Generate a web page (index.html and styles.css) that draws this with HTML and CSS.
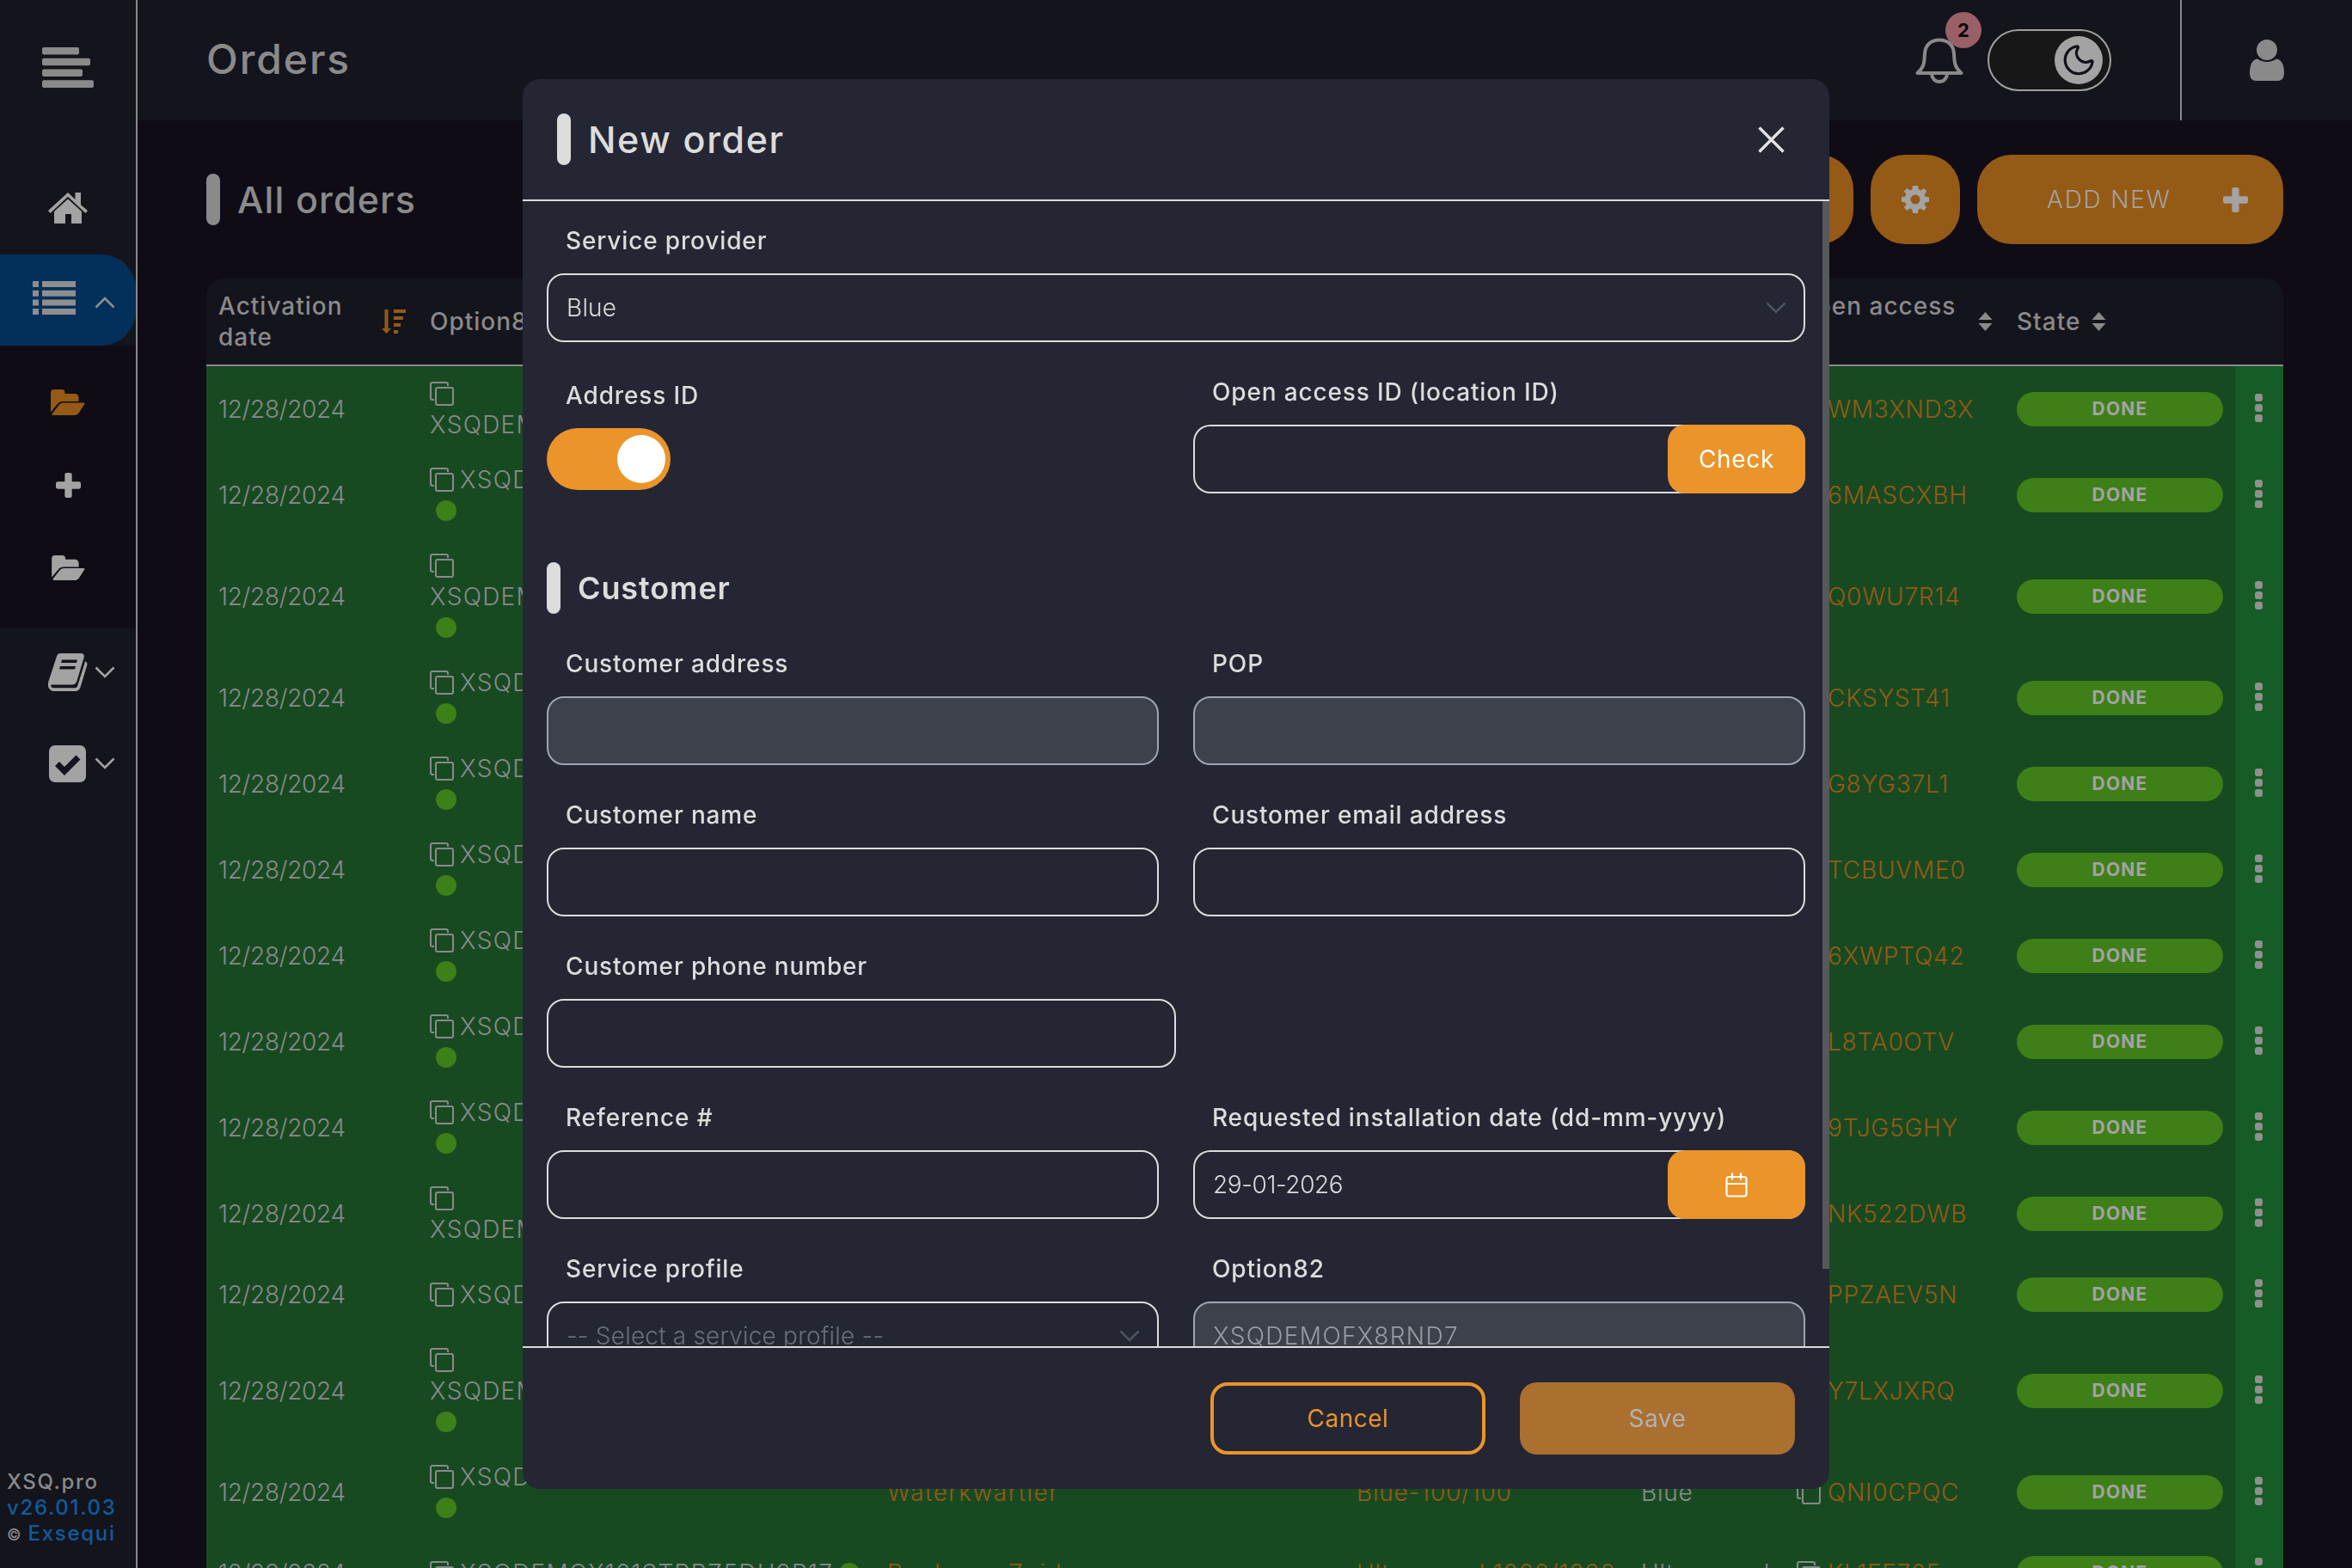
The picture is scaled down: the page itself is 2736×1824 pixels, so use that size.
FILE: index.html
```html
<!DOCTYPE html>
<html lang="en">
<head>
    <meta charset="UTF-8">
    <meta name="viewport" content="width=device-width, initial-scale=1.0">
    <title>Orders - XSQ.pro</title>
    <link rel="stylesheet" href="styles.css">
</head>
<body>
    <svg class="sprite">
        <symbol id="icon-copy" viewBox="0 0 28 28">
            <path d="M21 5V3a2 2 0 0 0-2-2H3a2 2 0 0 0-2 2v16a2 2 0 0 0 2 2h2" fill="none" stroke="currentColor" stroke-width="2"/>
            <rect x="7" y="7" width="20" height="20" rx="2" fill="none" stroke="currentColor" stroke-width="2"/>
        </symbol>
        <symbol id="icon-down" viewBox="0 0 24 14">
            <path d="M1.5 1.5L12 12L22.5 1.5" fill="none" stroke="currentColor" stroke-width="2.6"/>
        </symbol>
        <symbol id="icon-up" viewBox="0 0 24 14">
            <path d="M1.5 12.5L12 2L22.5 12.5" fill="none" stroke="currentColor" stroke-width="2.6"/>
        </symbol>
        <symbol id="icon-folder" viewBox="0 0 40 30">
            <path d="M0 26.5V4a4 4 0 0 1 4-4h8.500a4 4 0 0 1 4 4v1h11.500a4.500 4.500 0 0 1 4.500 4.500V14H15c-3.500 0-5.500 1-7.500 3.500z"/>
            <path d="M15 15.500h23.500c1 0 1.300.8.900 1.600l-6.300 9.700C31.500 29 30 30 27.500 30H3c-1.500 0-2-1-1.200-2L9.500 18.200C11 16.300 12.500 15.500 15 15.500z"/>
        </symbol>
        <symbol id="icon-plus" viewBox="0 0 28 28">
            <path d="M12 0h4a2 2 0 0 1 2 2v8h8a2 2 0 0 1 2 2v4a2 2 0 0 1-2 2h-8v8a2 2 0 0 1-2 2h-4a2 2 0 0 1-2-2v-8H2a2 2 0 0 1-2-2v-4a2 2 0 0 1 2-2h8V2a2 2 0 0 1 2-2z"/>
        </symbol>
        <symbol id="icon-sort" viewBox="0 0 16 22">
            <path d="M8 0L16 9H0zM8 22L0 13H16z"/>
        </symbol>
    </svg>

    <div class="app">
        <aside class="sidebar">
            <div class="burger">
                <svg width="60" height="47" viewBox="0 0 60 47"><rect width="43" height="8.500" rx="2"/><rect y="12.800" width="56" height="8.500" rx="2"/><rect y="25.500" width="47" height="8.500" rx="2"/><rect y="38.300" width="60" height="8.700" rx="2"/></svg>
            </div>
            <div class="nav-item">
                <svg class="nav-icon" width="46" height="36" viewBox="0 0 46 36"><path d="M23 0l8.500 8V0H38v14.200L46 21l-2.500 3L23 4.800L2.500 24L0 21z"/><path d="M23 7.500L39 22v14H27V25h-7v11H7V22z"/></svg>
            </div>
            <div class="nav-item nav-active">
                <svg width="50" height="39" viewBox="0 0 50 39"><path d="M0 0h7v7H0zM11 0h39v7H11zM0 10.700h7v7H0zM11 10.700h39v7H11zM0 21.400h7v7H0zM11 21.400h39v7H11zM0 32h7v7H0zM11 32h39v7H11z"/></svg>
                <svg class="chevron"><use href="#icon-up"/></svg>
            </div>
            <div class="submenu">
                <div class="sub-item sub-current"><svg width="40" height="30"><use href="#icon-folder"/></svg></div>
                <div class="sub-item"><svg width="29" height="29"><use href="#icon-plus"/></svg></div>
                <div class="sub-item"><svg width="39" height="29"><use href="#icon-folder"/></svg></div>
            </div>
            <div class="nav-item">
                <svg class="nav-icon" width="46" height="44" viewBox="0 0 46 44">
                    <path fill-rule="evenodd" d="M14.500 0H38c3 0 4.500 2 3.700 4.800L33.500 32c-1 3.200-2.800 4.500-6 4.500H4.500c-1.500 0-1.500 1.500-.8 2.500.6.900 1.600 1.200 3 1.200h24.500c1.500 0 2.400-.8 3-2.500L42.500 11.500c.2-.8.3-1.500.3-2.200 2 .8 3.200 2 2.400 4.700L37.500 39.500c-.8 2.700-2.800 4.500-6 4.500H7c-3.500 0-6-2-7-5.500V34L10 3.500C10.800 1 12 0 14.500 0zM16 7.500l-1 3.500h18l1-3.500zM14 15l-1 3.500h18l1-3.500z"/>
                </svg>
                <svg class="chevron"><use href="#icon-down"/></svg>
            </div>
            <div class="nav-item nav-tasks">
                <svg class="nav-icon" width="43" height="43" viewBox="0 0 43 43"><rect width="43" height="43" rx="7"/><path d="M9.500 21.500l8.500 8.500L34 14" class="tick"/></svg>
                <svg class="chevron"><use href="#icon-down"/></svg>
            </div>
            <div class="version">
                <div class="v-name">XSQ.pro</div>
                <div class="v-link v-num">v26.01.03</div>
                <div><span class="v-copy">©</span> <span class="v-link">Exsequi</span></div>
            </div>
        </aside>

        <div class="main">
            <header class="topbar">
                <h1>Orders</h1>
                <div class="bell">
                    <svg width="56" height="53" viewBox="0 0 56 53"><path d="M28 2.500c10 0 16.500 6 17 16 .5 11 1 16 8.500 22.500H2.500C10 34.500 10.500 29.500 11 18.500 11.500 8.500 18 2.500 28 2.500zM19 43c1 5 4.500 8 9 8s8-3 9-8" fill="none" stroke="currentColor" stroke-width="4" stroke-linejoin="round"/></svg>
                    <span class="badge">2</span>
                </div>
                <div class="theme-toggle">
                    <div class="knob"><svg width="36" height="36" viewBox="0 0 36 36"><path d="M15.500 2A16 16 0 1 0 34 20.500c.5-1.800-1-2.500-2.500-1.500C22 24 11.500 14 17 4.200c.8-1.400.2-2.500-1.500-2.200z" fill="none" stroke="#11111a" stroke-width="3.200"/></svg></div>
                </div>
                <div class="user">
                    <svg width="40" height="48" viewBox="0 0 40 48"><ellipse cx="20" cy="12" rx="12" ry="12"/><path d="M9 22.500c6 4.500 16 4.500 22 0 6 .5 9 7 9 16 0 6-2.500 9.500-7 9.500H7c-4.500 0-7-3.500-7-9.500 0-9 3-15.500 9-16z"/></svg>
                </div>
            </header>

            <div class="content">
                <div class="title-row">
                    <h2 class="marked">All orders</h2>
                    <div class="actions">
                        <button class="btn-icon"></button>
                        <button class="btn-icon">
                            <svg width="32" height="32" viewBox="0 0 32 32"><path fill-rule="evenodd" d="M13 0h6l.8 4.300 2.600 1.100L26 2.900 29.300 6.500l-2.700 3.400 1.100 2.800L32 13.200v5.600l-4.300.6-1.100 2.700 2.500 3.500-3.500 3.500-3.400-2.500-2.700 1.100L19 32h-6l-.6-4.300-2.700-1.100-3.500 2.500-3.300-3.600 2.500-3.400-1.100-2.700L0 18.800v-5.600l4.300-.6 1.100-2.700L2.900 6.400l3.400-3.500 3.400 2.500 2.700-1.100zM16 10.500a5.500 5.500 0 1 0 0 11 5.500 5.500 0 0 0 0-11z"/></svg>
                        </button>
                        <button class="btn-add"><span>ADD NEW</span><svg width="29" height="29"><use href="#icon-plus"/></svg></button>
                    </div>
                </div>

                <div class="table">
                    <div class="row head">
                        <div class="between"><span>Activation<br>date</span>
                            <svg class="sorted" width="28" height="28" viewBox="0 0 28 28"><path d="M3.500 0h4v22H11L5.500 28 0 22h3.500zM14 0h14v4H14zM14 8h11v4H14zM14 16h8v4H14zM14 24h5v4H14z"/></svg>
                        </div>
                        <div><span>Option82</span></div>
                        <div></div>
                        <div></div>
                        <div></div>
                        <div class="between"><span>Open access<br>ID</span><svg width="17" height="22"><use href="#icon-sort"/></svg></div>
                        <div class="state"><span>State</span><svg width="17" height="22"><use href="#icon-sort"/></svg></div>
                        <div></div>
                    </div>
                    <div id="orderRows"></div>
                </div>
            </div>
        </div>
    </div>

    <div class="modal">
        <div class="modal-head">
            <h2 class="marked">New order</h2>
            <svg width="31" height="31" viewBox="0 0 31 31"><path d="M1.500 1.500l28 28M29.500 1.500l-28 28" stroke="#e3e3e3" stroke-width="3.400" fill="none"/></svg>
        </div>
        <div class="modal-body">
            <div class="field">
                <label>Service provider</label>
                <div class="input select"><span>Blue</span><svg class="chevron"><use href="#icon-down"/></svg></div>
            </div>
            <div class="pair">
                <div class="field field-toggle">
                    <label>Address ID</label>
                    <div class="toggle"><div class="toggle-knob"></div></div>
                </div>
                <div class="field">
                    <label>Open access ID (location ID)</label>
                    <div class="input grouped"><button class="btn-end">Check</button></div>
                </div>
            </div>
            <h3 class="marked">Customer</h3>
            <div class="pair">
                <div class="field"><label>Customer address</label><div class="input disabled"></div></div>
                <div class="field"><label>POP</label><div class="input disabled"></div></div>
            </div>
            <div class="pair">
                <div class="field"><label>Customer name</label><div class="input"></div></div>
                <div class="field"><label>Customer email address</label><div class="input"></div></div>
            </div>
            <div class="field field-half"><label>Customer phone number</label><div class="input"></div></div>
            <div class="pair">
                <div class="field"><label>Reference #</label><div class="input"></div></div>
                <div class="field">
                    <label>Requested installation date (dd-mm-yyyy)</label>
                    <div class="input grouped"><span class="date">29-01-2026</span>
                        <button class="btn-end"><svg width="26" height="29" viewBox="0 0 26 29"><path d="M4 5h18a2.500 2.500 0 0 1 2.500 2.500v17.500a2.500 2.500 0 0 1-2.500 2.500H4a2.500 2.500 0 0 1-2.500-2.500V7.500A2.500 2.500 0 0 1 4 5zM1.500 13h23M8 .5v8M18 .5v8" fill="none" stroke="#fff" stroke-width="2.200"/></svg></button>
                    </div>
                </div>
            </div>
            <div class="pair">
                <div class="field"><label>Service profile</label><div class="input select placeholder"><span>-- Select a service profile --</span><svg class="chevron"><use href="#icon-down"/></svg></div></div>
                <div class="field"><label>Option82</label><div class="input disabled"><span class="code">XSQDEMOFX8RND7</span></div></div>
            </div>
            <div class="scroll-thumb"></div>
        </div>
        <div class="modal-foot">
            <button class="btn-cancel">Cancel</button>
            <button class="btn-save">Save</button>
        </div>
    </div>

    <script src="script.js"></script>
</body>
</html>
```
FILE: styles.css
```css
* {
    box-sizing: border-box;
}
body {
    margin: 0;
    height: 1824px;
    overflow: hidden;
    background: #0f0c16;
    color: #8a8a8a;
    font-family: Inter, "Open Sans", sans-serif;
    font-size: 28px;
    line-height: 36px;
}
h1, h2, h3 {
    margin: 0;
    font-weight: 500;
}
button {
    border: none;
    padding: 0;
    font: inherit;
    color: inherit;
}
svg {
    display: block;
    flex: none;
    fill: currentColor;
}
.sprite {
    position: absolute;
    width: 0;
    height: 0;
}
.app {
    display: flex;
    height: 1824px;
}

/* sidebar */
.sidebar {
    width: 160px;
    flex: none;
    display: flex;
    flex-direction: column;
    background: #14141d;
    border-right: 2px solid #8a8a8a;
}
.burger {
    height: 190px;
    padding: 55px 0 0 49px;
}
.nav-item {
    height: 106px;
    display: flex;
    align-items: center;
    justify-content: flex-end;
    gap: 8px;
    padding-right: 24px;
    padding-bottom: 2px;
    color: #a3a3a3;
}
.nav-item .nav-icon:last-child {
    margin-right: 32px;
}
.nav-tasks {
    gap: 10px;
}
.nav-active {
    background: #03305a;
    color: #8f8f8f;
    border-radius: 0 40px 40px 0;
    gap: 22px;
    padding-bottom: 5px;
}
.nav-active .chevron {
    margin-top: 11px;
}
.chevron {
    width: 24px;
    height: 14px;
}
.tick {
    fill: none;
    stroke: #14141d;
    stroke-width: 7;
}
.submenu {
    height: 328px;
    padding-top: 18px;
    background: #0f0c16;
    color: #a3a3a3;
}
.sub-item {
    height: 96px;
    display: flex;
    align-items: center;
    justify-content: center;
}
.sub-current {
    color: #955a15;
}
.version {
    margin-top: auto;
    padding: 0 0 23px 8px;
    font-size: 24px;
    font-weight: 500;
    line-height: 30px;
    white-space: nowrap;
    letter-spacing: 1.700px;
}
.v-link {
    color: #0f5c9c;
}
.v-copy {
    font-size: 18px;
    letter-spacing: 0;
}

/* top bar */
.main {
    flex: 1;
}
.topbar {
    height: 140px;
    display: flex;
    align-items: center;
    padding-left: 80px;
    background: #14141d;
}
.topbar h1 {
    font-size: 48px;
    line-height: 60px;
    margin: -3px auto 0 0;
    letter-spacing: 1.900px;
}
.bell {
    position: relative;
    margin-right: 28px;
}
.badge {
    position: absolute;
    left: 35px;
    top: -30px;
    width: 42px;
    height: 42px;
    border-radius: 50%;
    background: #9a6065;
    color: #08080c;
    font-size: 22px;
    font-weight: 700;
    line-height: 42px;
    text-align: center;
}
.theme-toggle {
    width: 144px;
    height: 72px;
    display: flex;
    align-items: center;
    justify-content: flex-end;
    padding-right: 8px;
    background: #171717;
    border: 2px solid #a0a0a0;
    border-radius: 36px;
}
.knob {
    width: 56px;
    height: 56px;
    display: flex;
    align-items: center;
    justify-content: center;
    border-radius: 50%;
    background: #a3a3a3;
}
.user {
    width: 200px;
    height: 140px;
    margin-left: 80px;
    display: flex;
    align-items: center;
    justify-content: center;
    border-left: 2px solid #8a8a8a;
}

/* page heading */
.content {
    padding: 40px 80px 0;
}
.title-row {
    display: flex;
    justify-content: space-between;
    align-items: center;
    height: 104px;
    margin-bottom: 40px;
}
.marked {
    display: flex;
    align-items: center;
    gap: 20px;
    font-size: 43px;
    line-height: 58px;
    letter-spacing: 1.100px;
}
.marked::before {
    content: "";
    width: 16px;
    height: 60px;
    border-radius: 8px;
    background: currentColor;
}
.actions {
    display: flex;
    gap: 20px;
    color: #a3a3a3;
}
.btn-icon {
    width: 104px;
    height: 104px;
    display: flex;
    align-items: center;
    justify-content: center;
    border-radius: 40px;
    background: #955a15;
}
.btn-add {
    width: 356px;
    height: 104px;
    display: flex;
    align-items: center;
    justify-content: space-between;
    padding: 0 41px 0 81px;
    border-radius: 40px;
    background: #955a15;
    font-weight: 300;
    letter-spacing: 1.800px;
}

/* orders table */
.table {
    border-radius: 20px 20px 0 0;
    overflow: hidden;
    background: #14141d;
}
.row {
    display: grid;
    grid-template-columns: 246px 532px 546px 331px 181px 256px 268px 56px;
}
.row > div {
    display: flex;
    align-items: center;
    padding: 0 14px;
    white-space: nowrap;
}
.head {
    height: 102px;
    border-bottom: 2px solid #8a8a8a;
    font-weight: 500;
    letter-spacing: 1px;
}
.head .between {
    justify-content: space-between;
}
.head .state {
    gap: 13px;
}
.sorted {
    color: #955a15;
}
.order {
    background: #184a22;
    font-weight: 300;
    letter-spacing: 0.800px;
}
.order-100 {
    height: 100px;
}
.order-136 {
    height: 136px;
}
.order-88 {
    height: 88px;
}
.order .day {
    letter-spacing: -0.300px;
}
.order .code {
    letter-spacing: 1.300px;
}
.order .line {
    display: flex;
    align-items: center;
    gap: 7px;
    height: 36px;
}
.dot {
    width: 24px;
    height: 24px;
    margin-left: 7px;
    border-radius: 50%;
    background: #3e7f18;
}
.line span + .dot {
    margin-left: 0;
}
.link {
    color: #955a15;
}
.order .area {
    letter-spacing: 1.500px;
}
.order .access {
    gap: 8px;
}
.pill {
    width: 240px;
    border-radius: 20px;
    background: #3e7f18;
    color: #a3a3a3;
    font-size: 21px;
    font-weight: 700;
    line-height: 40px;
    text-align: center;
    letter-spacing: 1.200px;
}
.order .menu {
    flex-direction: column;
    justify-content: center;
    gap: 3px;
    padding-right: 15px;
    padding-bottom: 4px;
    background: #165c26;
}
.menu i {
    width: 9px;
    height: 9px;
    border-radius: 3px;
    background: #909090;
}

/* new order dialog */
.modal {
    position: fixed;
    left: 608px;
    top: 92px;
    width: 1520px;
    height: 1640px;
    display: flex;
    flex-direction: column;
    border-radius: 20px;
    background: #252634;
    color: #dcdcdc;
}
.modal-head {
    height: 142px;
    flex: none;
    display: flex;
    align-items: center;
    justify-content: space-between;
    padding: 0 52px 0 40px;
    border-bottom: 2px solid #dcdcdc;
}
.modal-head .marked {
    letter-spacing: 1.600px;
}
.modal-body {
    position: relative;
    flex: 1;
    min-height: 0;
    overflow: hidden;
    display: flex;
    flex-direction: column;
    gap: 38px;
    padding: 26px 28px 0;
}
.modal-body .marked {
    flex: none;
    margin-top: 42px;
    font-size: 36px;
    font-weight: 600;
    letter-spacing: 0.900px;
}
.pair {
    display: grid;
    grid-template-columns: 1fr 1fr;
    gap: 40px;
}
.field label {
    display: block;
    padding-left: 22px;
    margin-bottom: 18px;
    line-height: 40px;
    font-weight: 450;
    letter-spacing: 0.850px;
}
.field-half {
    width: 732px;
}
.field-toggle {
    padding-top: 4px;
}
.input {
    height: 80px;
    display: flex;
    align-items: center;
    padding-left: 21px;
    border: 2px solid #dcdcdc;
    border-radius: 20px;
    font-weight: 300;
}
.disabled {
    background: #3d414b;
    border-color: #9fa4b3;
    color: #9b9ca1;
    letter-spacing: 1.350px;
}
.select {
    justify-content: space-between;
    padding-right: 20px;
    letter-spacing: 0.200px;
}
.select > span {
    font-weight: 350;
}
.select .chevron {
    color: #4f535c;
}
.placeholder span {
    color: #68707b;
}
.date {
    letter-spacing: -0.400px;
}
.grouped {
    border-right: none;
}
.btn-end {
    width: 160px;
    height: 80px;
    flex: none;
    display: flex;
    align-items: center;
    justify-content: center;
    margin-left: auto;
    border-radius: 20px;
    background: #eb942a;
    color: #fff;
    font-weight: 400;
    letter-spacing: 0.700px;
}
.toggle {
    width: 144px;
    height: 72px;
    padding: 8px 6px;
    border-radius: 36px;
    background: #eb942a;
}
.toggle-knob {
    width: 56px;
    height: 56px;
    margin-left: auto;
    border-radius: 50%;
    background: #fff;
}
.scroll-thumb {
    position: absolute;
    right: 0;
    top: 0;
    width: 8px;
    height: 1242px;
    background: #57585c;
}
.modal-foot {
    height: 166px;
    flex: none;
    display: flex;
    justify-content: flex-end;
    gap: 40px;
    padding: 40px 40px 0;
    border-top: 2px solid #dcdcdc;
}
.modal-foot button {
    width: 320px;
    height: 84px;
    border-radius: 20px;
    letter-spacing: 0.500px;
}
.btn-cancel {
    border: 4px solid #eb942a;
    background: none;
    color: #eb942a;
}
.btn-save {
    background: #ab6f30;
    color: #b2b2b5;
}
```
FILE: script.js
```javascript
const orders = [
    { code: 'XSQDEMO7K2PW4T9LMC3RHY6', access: 'WM3XND3X', wrap: true, dot: false, size: 100 },
    { code: 'XSQDEMOL4H8', access: '6MASCXBH', dot: true, size: 100 },
    { code: 'XSQDEMOV5N1QZ8XKTB2GWD7', access: 'Q0WU7R14', wrap: true, dot: true, size: 136 },
    { code: 'XSQDEMOR9C3', access: 'CKSYST41', dot: true, size: 100 },
    { code: 'XSQDEMOF6M2', access: 'G8YG37L1', dot: true, size: 100 },
    { code: 'XSQDEMOJ1T7', access: 'TCBUVME0', dot: true, size: 100 },
    { code: 'XSQDEMOP8W5', access: '6XWPTQ42', dot: true, size: 100 },
    { code: 'XSQDEMOB3K9', access: 'L8TA0OTV', dot: true, size: 100 },
    { code: 'XSQDEMOZ7D4', access: '9TJG5GHY', dot: true, size: 100 },
    { code: 'XSQDEMOH2Y6MPC8VRL5NQX1', access: 'NK522DWB', wrap: true, dot: false, size: 100 },
    { code: 'XSQDEMOG4X8', access: 'PPZAEV5N', dot: false, size: 88 },
    { code: 'XSQDEMOT9B2WJK6ZHF3CDM5', access: 'Y7LXJXRQ', wrap: true, dot: true, size: 136 },
    { code: 'XSQDEMON5R1', access: 'QNI0CPQC', dot: true, size: 100, area: 'Waterkwartier', profile: 'Blue-100/100', provider: 'Blue' },
    { code: 'XSQDEMOX161STRRZ5DH9R17', access: 'KL1FF765', inlineDot: true, size: 88, area: 'Beekweg Zuid', profile: 'Ultraspeed 1000/1000', provider: 'Ultraspeed' }
];

const copyIcon = '<svg width="28" height="28"><use href="#icon-copy"/></svg>';

function renderCode(order) {
    const dot = '<span class="dot"></span>';
    let html = '';
    if (order.wrap) {
        html += `<div class="line">${copyIcon}</div><div class="line">${order.code}</div>`;
    } else {
        html += `<div class="line">${copyIcon}<span>${order.code}</span>${order.inlineDot ? dot : ''}</div>`;
    }
    if (order.dot) {
        html += `<div class="line">${dot}</div>`;
    }
    return html;
}

const container = document.getElementById('orderRows');
for (const order of orders) {
    const row = document.createElement('div');
    row.className = `row order order-${order.size}`;
    row.innerHTML = `
        <div class="day">12/28/2024</div>
        <div><div class="code">${renderCode(order)}</div></div>
        <div class="link area">${order.area || ''}</div>
        <div class="link">${order.profile || ''}</div>
        <div>${order.provider || ''}</div>
        <div class="access">${copyIcon}<span class="link">${order.access}</span></div>
        <div><span class="pill">DONE</span></div>
        <div class="menu"><i></i><i></i><i></i></div>`;
    container.appendChild(row);
}
```
